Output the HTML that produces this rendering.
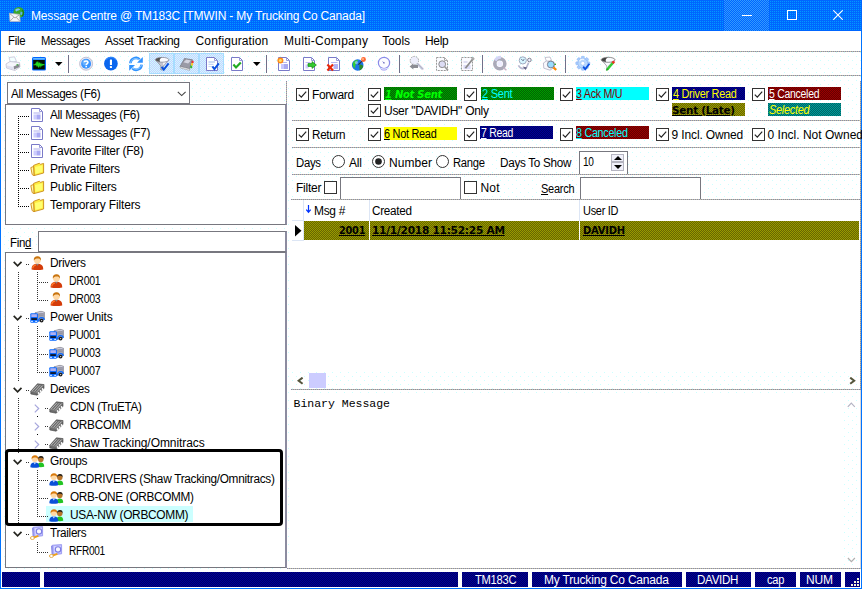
<!DOCTYPE html>
<html lang="en"><head><meta charset="utf-8"><title>Message Centre</title><style>
html,body{margin:0;padding:0}
body{width:862px;height:589px;position:relative;overflow:hidden;background-color:#fff;
background-image:radial-gradient(circle at 0.5px 0.5px,#ccffff 0.55px,transparent 0.7px),radial-gradient(circle at 4.5px 4.5px,#ccffff 0.55px,transparent 0.7px);
background-size:8px 8px;font-family:"Liberation Sans",sans-serif;font-size:12px}
.b{position:absolute;display:block}
.t{position:absolute;white-space:pre;line-height:16px;transform-origin:0 50%}
u{text-decoration:underline}
.bd{font-family:"DejaVu Sans","Liberation Sans",sans-serif}
.mn{font-family:"Liberation Mono",monospace}
</style></head><body>
<div class="b" style="left:0px;top:0px;width:862px;height:31px;background:conic-gradient(#0066ff 50%, #0099ff 0 75%, #0066ff 0) 0 0/2px 2px"></div>
<div class="b" style="left:724px;top:0px;width:45px;height:31px;background:repeating-conic-gradient(#0066ff 0 25%, #3399ff 0 50%) 0 0/2px 2px;"></div>
<svg class="b" style="left:9px;top:7px" width="16" height="16" viewBox="0 0 16 16"><circle cx="9.8" cy="5.4" r="5.4" fill="#3aa82a"/><path d="M6.5 2.2C8 1 10.4 1.2 11.4 2.6C10.2 3.8 8.6 3.2 7.6 4.6C6.6 4.2 6.2 3.2 6.5 2.2Z" fill="#7cc0ff"/><path d="M11.6 4.6L13.6 5.4L13 8L11.2 7.4Z" fill="#5cb0f0"/><path d="M13.4 3C14.8 5 14.6 7.6 13.2 9.4" fill="none" stroke="#1a7a1a" stroke-width="1.2"/><path d="M0.4 6.2L10.6 7.4L11.2 14.6L1 14.4Z" fill="#f4f4f8" stroke="#b8b8c0" stroke-width="0.7"/><path d="M0.6 6.4L6 11L10.6 7.6M1 14.2L4.8 10.2M11 14.4L7.2 10.2" fill="none" stroke="#a4a4a0" stroke-width="0.9"/></svg>
<svg class="b" style="left:742px;top:15px" width="10" height="1" viewBox="0 0 10 1"><rect width="10" height="1" fill="#fff"/></svg>
<svg class="b" style="left:787px;top:10px" width="10" height="10" viewBox="0 0 10 10"><rect x="0.5" y="0.5" width="9" height="9" fill="none" stroke="#fff"/></svg>
<svg class="b" style="left:833px;top:10px" width="10" height="10" viewBox="0 0 10 10"><path d="M0.3 0.3L9.7 9.7M9.7 0.3L0.3 9.7" stroke="#fff" stroke-width="1.1"/></svg>
<div class="b" style="left:0px;top:31px;width:1px;height:558px;background:#0073ff"></div>
<div class="b" style="left:861px;top:31px;width:1px;height:558px;background:#0073ff"></div>
<div class="b" style="left:0px;top:588px;width:862px;height:1px;background:#0073ff"></div>
<div class="b" style="left:1px;top:31px;width:860px;height:20px;background:#fff"></div>
<div class="b" style="left:1px;top:51px;width:860px;height:1px;background:repeating-linear-gradient(to right,#8888b4 0 1px,#c4c49c 1px 2px)"></div>
<div class="b" style="left:1px;top:75px;width:860px;height:1px;background:repeating-linear-gradient(to right,#8888b4 0 1px,#c4c49c 1px 2px)"></div>
<div class="b" style="left:149px;top:53px;width:25px;height:21px;background:repeating-conic-gradient(#ccccff 0 25%, #ccffff 0 50%) 0 0/2px 2px;box-shadow:inset 0 0 0 1px #a6dcff"></div>
<div class="b" style="left:174px;top:53px;width:25px;height:21px;background:repeating-conic-gradient(#ccffff 0 25%, #ccccff 0 50%) 0 0/2px 2px;box-shadow:inset 0 0 0 1px #a6dcff"></div>
<div class="b" style="left:199px;top:53px;width:25px;height:21px;background:repeating-conic-gradient(#ccccff 0 25%, #ccffff 0 50%) 0 0/2px 2px;box-shadow:inset 0 0 0 1px #a6dcff"></div>
<div class="b" style="left:68px;top:55px;width:1px;height:18px;background:#70708a"></div>
<div class="b" style="left:266px;top:55px;width:1px;height:18px;background:#70708a"></div>
<div class="b" style="left:399px;top:55px;width:1px;height:18px;background:#70708a"></div>
<div class="b" style="left:482px;top:55px;width:1px;height:18px;background:#70708a"></div>
<div class="b" style="left:565px;top:55px;width:1px;height:18px;background:#70708a"></div>
<svg class="b" style="left:55px;top:62px" width="8" height="4" viewBox="0 0 8 4"><path d="M0 0H7.5L3.75 4Z" fill="#000"/></svg>
<svg class="b" style="left:252.5px;top:62px" width="8" height="4" viewBox="0 0 8 4"><path d="M0 0H7.5L3.75 4Z" fill="#000"/></svg>
<svg class="b" style="left:5px;top:56px;overflow:visible" width="16" height="16" viewBox="0 0 16 16"><path d="M4 1.5L9.5 0.8L11.5 5.5L5.5 6.5Z" fill="#f4ffff" stroke="#c4c4d8" stroke-width="0.8"/><path d="M1 8L5 5.5L14.5 6.5L15 11L10 14.5L1.5 12Z" fill="#f6f6fb" stroke="#c0c0d0" stroke-width="0.8"/><path d="M8.5 10.5L14.5 8V11L9 13.5Z" fill="#8a8a92"/><path d="M2 9.5L8.5 11V13.5L2 12Z" fill="#e0e0f0"/><rect x="11.5" y="8.2" width="1.6" height="1.2" fill="#3a3"/></svg>
<svg class="b" style="left:31px;top:56px;overflow:visible" width="16" height="16" viewBox="0 0 16 16"><rect x="1" y="1" width="14" height="13.6" rx="1.6" fill="#06f"/><rect x="2.2" y="2" width="11.6" height="1.6" fill="#6bf"/><rect x="2.2" y="4" width="11.6" height="9.4" fill="#041004"/><path d="M2.5 8.8H4.5L5.3 7L6 10.5L6.8 5.5L7.6 11.5L8.4 6.5L9.2 10L10 7.8L10.8 9.6L11.6 8.4L13.5 8.8" fill="none" stroke="#2d2" stroke-width="1.1"/></svg>
<svg class="b" style="left:78px;top:56px;overflow:visible" width="16" height="16" viewBox="0 0 16 16"><circle cx="8.1" cy="7.7" r="6.5" fill="#e8e8f4" stroke="#b4b4c8" stroke-width="0.8"/><circle cx="8.1" cy="7.7" r="5" fill="#3a94ff"/><circle cx="7.4" cy="6.4" r="3" fill="#7cbcff" opacity="0.7"/><path d="M6.2 6.3C6.2 4.4 10 4.4 10 6.3C10 7.6 8.2 7.6 8.2 9" fill="none" stroke="#fff" stroke-width="1.5"/><rect x="7.4" y="9.8" width="1.6" height="1.5" fill="#fff"/></svg>
<svg class="b" style="left:103px;top:56px;overflow:visible" width="16" height="16" viewBox="0 0 16 16"><circle cx="7.9" cy="7.7" r="6.85" fill="#0a66ee"/><path d="M3 4A6 6 0 0 1 13 4" fill="none" stroke="#3a8cff" stroke-width="1.2" opacity="0.8"/><rect x="6.9" y="3.4" width="2.1" height="5.6" rx="0.6" fill="#fff"/><rect x="6.9" y="10" width="2.1" height="2" rx="0.5" fill="#fff"/></svg>
<svg class="b" style="left:128px;top:56px;overflow:visible" width="16" height="16" viewBox="0 0 16 16"><path d="M2.4 7.2A5.5 5.5 0 0 1 11.6 3.4" fill="none" stroke="#2f92ff" stroke-width="2.6"/><path d="M2.6 7A5.3 5.3 0 0 1 11 3.6" fill="none" stroke="#9cd0ff" stroke-width="0.9"/><path d="M14.8 1V6.8H9Z" fill="#2f92ff"/><path d="M13.6 8.6A5.5 5.5 0 0 1 4.4 12.4" fill="none" stroke="#2f92ff" stroke-width="2.6"/><path d="M13.4 8.8A5.3 5.3 0 0 1 5 12.2" fill="none" stroke="#9cd0ff" stroke-width="0.9"/><path d="M1.2 14.8V9H7Z" fill="#2f92ff"/></svg>
<svg class="b" style="left:154px;top:56px;overflow:visible" width="16" height="16" viewBox="0 0 16 16"><path d="M1.4 3.8L6.8 10V14H9.4V10L14.8 3.8Z" fill="#c4c4d0" stroke="#8a8a98" stroke-width="0.7"/><path d="M9 6L13.4 5L9.2 9.6Z" fill="#f4f4fa"/><ellipse cx="8.1" cy="3.8" rx="6.8" ry="2.4" fill="#fbfbff" stroke="#8a8a98" stroke-width="0.8"/><path d="M1.6 3.8C2 2.2 5 1.5 8 1.5C6 2.2 5.2 4 6 5.9C3.5 5.6 1.6 4.8 1.6 3.8Z" fill="#555"/><path d="M7.6 10.8L9.8 13.6L14.6 7.4" fill="none" stroke="#0a50e0" stroke-width="1.9"/></svg>
<svg class="b" style="left:179px;top:56px;overflow:visible" width="16" height="16" viewBox="0 0 16 16"><path d="M1 10.5L5.5 2.5L13.5 3.8L10.5 12.8Z" fill="#9a9aa6" stroke="#70707c" stroke-width="0.7"/><path d="M4.4 6.2L7.4 3.6L11.8 4.6L9.2 7.4Z" fill="#d4d4e0"/><path d="M1 10.5L10.5 12.8L10.7 14.4L1.4 12Z" fill="#f2f2f6" stroke="#888" stroke-width="0.5"/><rect x="12.6" y="4.8" width="2" height="2.4" fill="#e33"/><rect x="12" y="7.2" width="2" height="2.4" fill="#fc2"/><rect x="11.2" y="9.6" width="2" height="2.6" fill="#3b3"/></svg>
<svg class="b" style="left:206px;top:57px;overflow:visible" width="14" height="14" viewBox="0 0 14 14"><path d="M0.5 0.5H8.5L11.5 3.5V13.5H0.5Z" fill="#fff" stroke="#7a7ac8"/><path d="M8.5 0.5V3.5H11.5" fill="none" stroke="#9a9ad8"/><rect x="2.5" y="4.5" width="6.5" height="1" fill="#9ab8f0"/><rect x="2.5" y="6.8" width="5" height="1" fill="#b8ccf4"/><rect x="2.5" y="9" width="3.5" height="1" fill="#c8d8f8"/><path d="M6.4 9.4L8.4 12L12.8 6.4" fill="none" stroke="#0a50e0" stroke-width="2"/></svg>
<svg class="b" style="left:231px;top:57px;overflow:visible" width="14" height="14" viewBox="0 0 14 14"><path d="M0.5 0.5H8.5L11.5 3.5V13.5H0.5Z" fill="#fff" stroke="#7a7ac8"/><path d="M8.5 0.5V3.5H11.5" fill="none" stroke="#9a9ad8"/><path d="M2.4 7.6L5 10.4L9.8 5.4" fill="none" stroke="#2a2" stroke-width="2.2"/></svg>
<svg class="b" style="left:278px;top:57px;overflow:visible" width="14" height="14" viewBox="0 0 14 14"><path d="M0.5 0.5H8.5L11.5 3.5V13.5H0.5Z" fill="#fff" stroke="#7a7ac8"/><path d="M8.5 0.5V3.5H11.5" fill="none" stroke="#9a9ad8"/><rect x="3" y="5" width="6" height="1" fill="#b8b8f0"/><rect x="3" y="7" width="3" height="5" fill="#c8c8ff"/><rect x="6" y="7" width="4" height="5" fill="#a8a8f0"/><circle cx="2.4" cy="3.4" r="3" fill="#ff8a1a"/><circle cx="2.4" cy="3.4" r="1.5" fill="#ffe066"/></svg>
<svg class="b" style="left:303px;top:57px;overflow:visible" width="14" height="14" viewBox="0 0 14 14"><path d="M0.5 0.5H8.5L11.5 3.5V13.5H0.5Z" fill="#fff" stroke="#7a7ac8"/><path d="M8.5 0.5V3.5H11.5" fill="none" stroke="#9a9ad8"/><rect x="2.5" y="5" width="5" height="1" fill="#c0c0f4"/><rect x="2.5" y="7.5" width="3" height="4" fill="#d0d0ff"/><path d="M5 6.6H9V4.6L13.4 8L9 11.4V9.4H5Z" fill="#3c3" stroke="#181" stroke-width="0.7"/></svg>
<svg class="b" style="left:328px;top:57px;overflow:visible" width="14" height="14" viewBox="0 0 14 14"><path d="M0.5 0.5H8.5L11.5 3.5V13.5H0.5Z" fill="#fff" stroke="#7a7ac8"/><path d="M8.5 0.5V3.5H11.5" fill="none" stroke="#9a9ad8"/><rect x="3" y="5" width="6.5" height="1" fill="#b8b8f0"/><rect x="5.5" y="7" width="4.5" height="5" fill="#b4b4f4"/><path d="M-0.6 7.6L5 13.4M5 7.6L-0.6 13.4" stroke="#e8280a" stroke-width="2.2"/></svg>
<svg class="b" style="left:351px;top:56px;overflow:visible" width="16" height="16" viewBox="0 0 16 16"><circle cx="6.7" cy="9" r="5.8" fill="#1a74e8"/><path d="M2.2 6.2C3.6 4.4 5.6 3.6 7 4.2C6.4 5.6 5.4 6 5.6 7.6C4.4 8.6 3.6 10.6 4.4 12.6C2.4 11.4 1 8.6 2.2 6.2Z" fill="#3c3"/><path d="M8.6 8.6C10 8 11.6 8.8 12.2 10.2C11.6 12.6 9.6 14.2 8.4 14.4C9 12.6 7.8 10.4 8.6 8.6Z" fill="#2a8a2a"/><circle cx="5.4" cy="6.6" r="1.6" fill="#9cf" opacity="0.7"/><path d="M7.4 8.6L11.6 4.6" stroke="#333" stroke-width="1.2"/><circle cx="12.5" cy="3.5" r="2.4" fill="#f63"/><circle cx="12" cy="3" r="1" fill="#fb8"/></svg>
<svg class="b" style="left:376px;top:56px;overflow:visible" width="16" height="16" viewBox="0 0 16 16"><circle cx="8" cy="6.9" r="5.6" fill="#fdfdff" stroke="#8a8ae8" stroke-width="1.2"/><path d="M4.6 12.6C5 14.6 11 14.6 11.4 12.6" fill="#eef" stroke="#9a9af0" stroke-width="0.9"/><path d="M8 6.9L6.8 5.6" stroke="#66c" stroke-width="0.9"/><circle cx="8" cy="6.9" r="0.7" fill="#55a"/></svg>
<svg class="b" style="left:408px;top:56px;overflow:visible" width="16" height="16" viewBox="0 0 16 16"><circle cx="6.4" cy="4.6" r="4.2" fill="#eeeefc" stroke="#9a9a9a" stroke-width="0.9" stroke-dasharray="1.6 1"/><path d="M9.4 7.6L15 13.4" stroke="#d0d0e4" stroke-width="2.6"/><path d="M9.4 7.6L15 13.4" stroke="#9a9aa8" stroke-width="0.7"/><path d="M1.6 10.4L5.4 7.4V9H10V12H5.4V13.6Z" fill="#8c8c94"/></svg>
<svg class="b" style="left:436px;top:57px;overflow:visible" width="14" height="14" viewBox="0 0 14 14"><path d="M0.5 0.5H8.5L11.5 3.5V13.5H0.5Z" fill="#fbfbff" stroke="#9a9a9a" stroke-dasharray="2 1"/><path d="M8.5 0.5V3.5H11.5" fill="none" stroke="#aaa"/><circle cx="6.2" cy="7.2" r="3.4" fill="#dcdcf4" stroke="#8c8c8c" stroke-width="1"/><path d="M8.8 9.8L12 13.4" stroke="#999" stroke-width="1.6"/></svg>
<svg class="b" style="left:461px;top:57px;overflow:visible" width="14" height="14" viewBox="0 0 14 14"><path d="M0.5 0.5H11.5V13.5H0.5Z" fill="#fbfbff" stroke="#9a9a9a" stroke-dasharray="2 1"/><rect x="2.5" y="4.5" width="4" height="1" fill="#c4c4e8"/><rect x="2.5" y="8" width="7" height="4" fill="#dcdcf8"/><path d="M4.4 11.2L11.6 2.2" stroke="#8c8c8c" stroke-width="1.8"/><circle cx="12" cy="1.8" r="1.2" fill="#bbb" stroke="#888" stroke-width="0.5"/></svg>
<svg class="b" style="left:492px;top:56px;overflow:visible" width="16" height="16" viewBox="0 0 16 16"><circle cx="7.8" cy="7.7" r="5" fill="none" stroke="#aaaab8" stroke-width="3.6"/><path d="M3.2 4.4A6.4 6.4 0 0 1 9 1.2" fill="none" stroke="#d4d4f4" stroke-width="3"/><circle cx="7.8" cy="7.7" r="2.6" fill="#eef"/><path d="M11.4 11.6L14.4 14.2" stroke="#c4b4c4" stroke-width="1.4"/></svg>
<svg class="b" style="left:517px;top:56px;overflow:visible" width="16" height="16" viewBox="0 0 16 16"><circle cx="5.8" cy="4.4" r="3.6" fill="#d8f6ff" stroke="#9aa0b8" stroke-width="0.9"/><path d="M4.4 3.2L5.8 4.6L7.4 3.4" fill="none" stroke="#446" stroke-width="0.9"/><circle cx="12.4" cy="4" r="1.8" fill="#eef" stroke="#778" stroke-width="0.9"/><path d="M1.4 9.4C3 12.4 6 13.4 9.4 11.6L11.6 6.6" fill="none" stroke="#b8b8d0" stroke-width="1.6"/><path d="M5.6 10.6L8.6 14L10 11.4Z" fill="#668"/></svg>
<svg class="b" style="left:542px;top:56px;overflow:visible" width="16" height="16" viewBox="0 0 16 16"><path d="M3 1.5L8 1L9.6 4.6L4.6 5.6Z" fill="#fff" stroke="#b4b4c4" stroke-width="0.8"/><path d="M1.4 7L4.4 5L12 6L12.6 11L8 14.2L1.8 12.2Z" fill="#f8f8fc" stroke="#b0b0c4" stroke-width="0.8"/><circle cx="8.8" cy="8.5" r="3.4" fill="#9adcff" stroke="#778" stroke-width="0.9"/><rect x="12.4" y="7.6" width="1.6" height="1.4" fill="#3a3"/><path d="M11.4 11.4L14.2 14" stroke="#f80" stroke-width="2.2"/></svg>
<svg class="b" style="left:575px;top:56px;overflow:visible" width="16" height="16" viewBox="0 0 16 16"><rect x="6.3" y="0.3" width="3" height="3.4" rx="0.8" fill="#a8ccff" stroke="#86b0f0" stroke-width="0.5" transform="rotate(0 7.8 7.3)"/><rect x="6.3" y="0.3" width="3" height="3.4" rx="0.8" fill="#a8ccff" stroke="#86b0f0" stroke-width="0.5" transform="rotate(45 7.8 7.3)"/><rect x="6.3" y="0.3" width="3" height="3.4" rx="0.8" fill="#a8ccff" stroke="#86b0f0" stroke-width="0.5" transform="rotate(90 7.8 7.3)"/><rect x="6.3" y="0.3" width="3" height="3.4" rx="0.8" fill="#a8ccff" stroke="#86b0f0" stroke-width="0.5" transform="rotate(135 7.8 7.3)"/><rect x="6.3" y="0.3" width="3" height="3.4" rx="0.8" fill="#a8ccff" stroke="#86b0f0" stroke-width="0.5" transform="rotate(180 7.8 7.3)"/><rect x="6.3" y="0.3" width="3" height="3.4" rx="0.8" fill="#a8ccff" stroke="#86b0f0" stroke-width="0.5" transform="rotate(225 7.8 7.3)"/><rect x="6.3" y="0.3" width="3" height="3.4" rx="0.8" fill="#a8ccff" stroke="#86b0f0" stroke-width="0.5" transform="rotate(270 7.8 7.3)"/><rect x="6.3" y="0.3" width="3" height="3.4" rx="0.8" fill="#a8ccff" stroke="#86b0f0" stroke-width="0.5" transform="rotate(315 7.8 7.3)"/><circle cx="7.8" cy="7.3" r="4.9" fill="#b8d8ff" stroke="#86b0f0" stroke-width="0.6"/><circle cx="7.8" cy="7.3" r="2" fill="#fff" stroke="#9ac0f4" stroke-width="0.6"/><path d="M4.4 5.2A4 4 0 0 1 9 3.4" fill="none" stroke="#fff" stroke-width="1.2" opacity="0.8"/><path d="M8.2 10.6L10.2 13.2L14.4 7.8" fill="none" stroke="#0a50e0" stroke-width="1.8"/></svg>
<svg class="b" style="left:600px;top:56px;overflow:visible" width="16" height="16" viewBox="0 0 16 16"><path d="M1.4 3.8L6.8 10V14L8.6 13V10L14.8 3.8Z" fill="#fafaff" stroke="#8a8a98" stroke-width="0.7"/><ellipse cx="8.1" cy="3.8" rx="6.9" ry="2.5" fill="#fbfbff" stroke="#777" stroke-width="0.8"/><path d="M1.5 3.8C2 2.2 5 1.5 8 1.5C6 2.2 5.2 4 6 5.9C3.5 5.6 1.5 4.8 1.5 3.8Z" fill="#444"/><path d="M7.2 13.6L13.2 6.4" stroke="#3c3" stroke-width="2.4"/><path d="M12.6 7.2L14.2 5.2" stroke="#e32" stroke-width="2.6"/><path d="M6.4 14.6L7.8 12.8" stroke="#2a2" stroke-width="1.6"/></svg>
<div class="b" style="left:7px;top:82px;width:183px;height:22px;background:#fff;border:1px solid #77777f;box-sizing:border-box"></div>
<svg class="b" style="left:177px;top:91px" width="10" height="6" viewBox="0 0 10 6"><path d="M0.8 0.8L4.7 4.6L8.6 0.8" fill="none" stroke="#444" stroke-width="1.1"/></svg>
<div class="b" style="left:5px;top:104px;width:282px;height:121px;background:#fff;border:1px solid #77777f;border-right:2px solid #8c8ca0;box-sizing:border-box"></div>
<div class="b" style="left:18px;top:116px;width:1px;height:91px;background:repeating-linear-gradient(to bottom,#000 0 1px,transparent 1px 2px)"></div>
<div class="b" style="left:18px;top:116px;width:11px;height:1px;background:repeating-linear-gradient(to right,#000 0 1px,transparent 1px 2px)"></div>
<div class="b" style="left:18px;top:134px;width:11px;height:1px;background:repeating-linear-gradient(to right,#000 0 1px,transparent 1px 2px)"></div>
<div class="b" style="left:18px;top:152px;width:11px;height:1px;background:repeating-linear-gradient(to right,#000 0 1px,transparent 1px 2px)"></div>
<div class="b" style="left:18px;top:170px;width:11px;height:1px;background:repeating-linear-gradient(to right,#000 0 1px,transparent 1px 2px)"></div>
<div class="b" style="left:18px;top:188px;width:11px;height:1px;background:repeating-linear-gradient(to right,#000 0 1px,transparent 1px 2px)"></div>
<div class="b" style="left:18px;top:206px;width:11px;height:1px;background:repeating-linear-gradient(to right,#000 0 1px,transparent 1px 2px)"></div>
<div class="b" style="left:38px;top:231px;width:249px;height:21px;background:#fff;border:1px solid #77777f;border-right:2px solid #8c8ca0;box-sizing:border-box"></div>
<div class="b" style="left:5px;top:252px;width:282px;height:316px;background:#fff;border:1px solid #77777f;border-right:2px solid #8c8ca0;box-sizing:border-box"></div>
<div class="b" style="left:46px;top:506px;width:147px;height:16px;background:#ccffff"></div>
<div class="b" style="left:18px;top:272px;width:1px;height:38px;background:repeating-linear-gradient(to bottom,#333 0 1px,transparent 1px 2px)"></div>
<div class="b" style="left:18px;top:326px;width:1px;height:56px;background:repeating-linear-gradient(to bottom,#333 0 1px,transparent 1px 2px)"></div>
<div class="b" style="left:18px;top:398px;width:1px;height:56px;background:repeating-linear-gradient(to bottom,#333 0 1px,transparent 1px 2px)"></div>
<div class="b" style="left:18px;top:470px;width:1px;height:56px;background:repeating-linear-gradient(to bottom,#333 0 1px,transparent 1px 2px)"></div>
<div class="b" style="left:26px;top:264px;width:4px;height:1px;background:repeating-linear-gradient(to right,#333 0 1px,transparent 1px 2px)"></div>
<div class="b" style="left:26px;top:318px;width:4px;height:1px;background:repeating-linear-gradient(to right,#333 0 1px,transparent 1px 2px)"></div>
<div class="b" style="left:26px;top:390px;width:4px;height:1px;background:repeating-linear-gradient(to right,#333 0 1px,transparent 1px 2px)"></div>
<div class="b" style="left:26px;top:462px;width:4px;height:1px;background:repeating-linear-gradient(to right,#333 0 1px,transparent 1px 2px)"></div>
<div class="b" style="left:26px;top:534px;width:4px;height:1px;background:repeating-linear-gradient(to right,#333 0 1px,transparent 1px 2px)"></div>
<div class="b" style="left:37px;top:272px;width:1px;height:29px;background:repeating-linear-gradient(to bottom,#333 0 1px,transparent 1px 2px)"></div>
<div class="b" style="left:37px;top:282px;width:11px;height:1px;background:repeating-linear-gradient(to right,#333 0 1px,transparent 1px 2px)"></div>
<div class="b" style="left:37px;top:300px;width:11px;height:1px;background:repeating-linear-gradient(to right,#333 0 1px,transparent 1px 2px)"></div>
<div class="b" style="left:37px;top:326px;width:1px;height:47px;background:repeating-linear-gradient(to bottom,#333 0 1px,transparent 1px 2px)"></div>
<div class="b" style="left:37px;top:336px;width:11px;height:1px;background:repeating-linear-gradient(to right,#333 0 1px,transparent 1px 2px)"></div>
<div class="b" style="left:37px;top:354px;width:11px;height:1px;background:repeating-linear-gradient(to right,#333 0 1px,transparent 1px 2px)"></div>
<div class="b" style="left:37px;top:372px;width:11px;height:1px;background:repeating-linear-gradient(to right,#333 0 1px,transparent 1px 2px)"></div>
<div class="b" style="left:37px;top:398px;width:1px;height:1px;background:#000"></div>
<div class="b" style="left:37px;top:416px;width:1px;height:1px;background:#000"></div>
<div class="b" style="left:37px;top:434px;width:1px;height:1px;background:#000"></div>
<div class="b" style="left:45px;top:408px;width:4px;height:1px;background:repeating-linear-gradient(to right,#333 0 1px,transparent 1px 2px)"></div>
<div class="b" style="left:45px;top:426px;width:4px;height:1px;background:repeating-linear-gradient(to right,#333 0 1px,transparent 1px 2px)"></div>
<div class="b" style="left:45px;top:444px;width:4px;height:1px;background:repeating-linear-gradient(to right,#333 0 1px,transparent 1px 2px)"></div>
<div class="b" style="left:37px;top:470px;width:1px;height:47px;background:repeating-linear-gradient(to bottom,#333 0 1px,transparent 1px 2px)"></div>
<div class="b" style="left:37px;top:480px;width:11px;height:1px;background:repeating-linear-gradient(to right,#333 0 1px,transparent 1px 2px)"></div>
<div class="b" style="left:37px;top:498px;width:11px;height:1px;background:repeating-linear-gradient(to right,#333 0 1px,transparent 1px 2px)"></div>
<div class="b" style="left:37px;top:516px;width:11px;height:1px;background:repeating-linear-gradient(to right,#333 0 1px,transparent 1px 2px)"></div>
<div class="b" style="left:37px;top:542px;width:1px;height:11px;background:repeating-linear-gradient(to bottom,#333 0 1px,transparent 1px 2px)"></div>
<div class="b" style="left:37px;top:552px;width:11px;height:1px;background:repeating-linear-gradient(to right,#333 0 1px,transparent 1px 2px)"></div>
<svg class="b" style="left:13px;top:261px" width="10" height="7" viewBox="0 0 10 7"><path d="M0.7 0.9L4.6 4.9L8.5 0.9" fill="none" stroke="#262620" stroke-width="1.7"/></svg>
<svg class="b" style="left:13px;top:315px" width="10" height="7" viewBox="0 0 10 7"><path d="M0.7 0.9L4.6 4.9L8.5 0.9" fill="none" stroke="#262620" stroke-width="1.7"/></svg>
<svg class="b" style="left:13px;top:387px" width="10" height="7" viewBox="0 0 10 7"><path d="M0.7 0.9L4.6 4.9L8.5 0.9" fill="none" stroke="#262620" stroke-width="1.7"/></svg>
<svg class="b" style="left:13px;top:459px" width="10" height="7" viewBox="0 0 10 7"><path d="M0.7 0.9L4.6 4.9L8.5 0.9" fill="none" stroke="#262620" stroke-width="1.7"/></svg>
<svg class="b" style="left:13px;top:531px" width="10" height="7" viewBox="0 0 10 7"><path d="M0.7 0.9L4.6 4.9L8.5 0.9" fill="none" stroke="#262620" stroke-width="1.7"/></svg>
<svg class="b" style="left:34px;top:404px" width="6" height="10" viewBox="0 0 6 10"><path d="M0.8 0.6L4.7 4.5L0.8 8.4" fill="none" stroke="#a6a6dc" stroke-width="1.2"/></svg>
<svg class="b" style="left:34px;top:422px" width="6" height="10" viewBox="0 0 6 10"><path d="M0.8 0.6L4.7 4.5L0.8 8.4" fill="none" stroke="#a6a6dc" stroke-width="1.2"/></svg>
<svg class="b" style="left:34px;top:440px" width="6" height="10" viewBox="0 0 6 10"><path d="M0.8 0.6L4.7 4.5L0.8 8.4" fill="none" stroke="#a6a6dc" stroke-width="1.2"/></svg>
<svg class="b" style="left:31px;top:108px;overflow:visible" width="13" height="14" viewBox="0 0 13 14"><path d="M0.5 0.5H8.5L11.5 3.5V13.5H0.5Z" fill="#fff" stroke="#7a7ac8"/><path d="M8.5 0.5V3.5H11.5" fill="none" stroke="#9a9ad8"/><rect x="2.5" y="4.5" width="7" height="1" fill="#b0b0ee"/><rect x="2.5" y="6.5" width="3" height="5" fill="#ccf"/><rect x="5.5" y="6.5" width="4" height="5" fill="#aaaaf4"/></svg>
<svg class="b" style="left:31px;top:126px;overflow:visible" width="13" height="14" viewBox="0 0 13 14"><path d="M0.5 0.5H8.5L11.5 3.5V13.5H0.5Z" fill="#fff" stroke="#7a7ac8"/><path d="M8.5 0.5V3.5H11.5" fill="none" stroke="#9a9ad8"/><rect x="2.5" y="4.5" width="7" height="1" fill="#b0b0ee"/><rect x="2.5" y="6.5" width="3" height="5" fill="#ccf"/><rect x="5.5" y="6.5" width="4" height="5" fill="#aaaaf4"/></svg>
<svg class="b" style="left:31px;top:144px;overflow:visible" width="13" height="14" viewBox="0 0 13 14"><path d="M0.5 0.5H8.5L11.5 3.5V13.5H0.5Z" fill="#fff" stroke="#7a7ac8"/><path d="M8.5 0.5V3.5H11.5" fill="none" stroke="#9a9ad8"/><rect x="2.5" y="4.5" width="7" height="1" fill="#b0b0ee"/><rect x="2.5" y="6.5" width="3" height="5" fill="#ccf"/><rect x="5.5" y="6.5" width="4" height="5" fill="#aaaaf4"/></svg>
<svg class="b" style="left:30px;top:162px;overflow:visible" width="15" height="14" viewBox="0 0 15 14"><path d="M3.6 3.4L9.4 1.2L10.4 2.4L13.6 1.4V11L4 13.6Z" fill="#ffec40" stroke="#c88a1a" stroke-width="0.9"/><path d="M0.8 5.6L3.6 4.4L4 13.6L2.2 12.6Z" fill="#fff8b0" stroke="#d08a10" stroke-width="0.9"/><path d="M5 5L12.4 3.2V9.8L5.4 12Z" fill="#ffff70"/></svg>
<svg class="b" style="left:30px;top:180px;overflow:visible" width="15" height="14" viewBox="0 0 15 14"><path d="M3.6 3.4L9.4 1.2L10.4 2.4L13.6 1.4V11L4 13.6Z" fill="#ffec40" stroke="#c88a1a" stroke-width="0.9"/><path d="M0.8 5.6L3.6 4.4L4 13.6L2.2 12.6Z" fill="#fff8b0" stroke="#d08a10" stroke-width="0.9"/><path d="M5 5L12.4 3.2V9.8L5.4 12Z" fill="#ffff70"/></svg>
<svg class="b" style="left:30px;top:198px;overflow:visible" width="15" height="14" viewBox="0 0 15 14"><path d="M3.6 3.4L9.4 1.2L10.4 2.4L13.6 1.4V11L4 13.6Z" fill="#ffec40" stroke="#c88a1a" stroke-width="0.9"/><path d="M0.8 5.6L3.6 4.4L4 13.6L2.2 12.6Z" fill="#fff8b0" stroke="#d08a10" stroke-width="0.9"/><path d="M5 5L12.4 3.2V9.8L5.4 12Z" fill="#ffff70"/></svg>
<svg class="b" style="left:31px;top:256px;overflow:visible" width="13" height="14" viewBox="0 0 13 14"><path d="M0.6 13.4C0.4 9.4 3 7.8 6.4 7.8C9.8 7.8 12.4 9.4 12.2 13.4Q6.4 14.6 0.6 13.4Z" fill="#d43c0a"/><path d="M1.6 12.4C2 10 3.4 9 5 8.8" fill="none" stroke="#ff7a2a" stroke-width="1.2"/><path d="M4.8 7.8L6.4 9.8L8 7.8Z" fill="#888"/><circle cx="6.4" cy="4.2" r="3.4" fill="#ffd8a4"/><path d="M2.8 4.6C2.4 1.6 4.4 0.2 6.6 0.3C9 0.4 10.4 2 10 4.6C9.4 3 8.4 2.4 6.8 2.4C5 2.4 3.6 3 2.8 4.6Z" fill="#c87410"/></svg>
<svg class="b" style="left:50px;top:274px;overflow:visible" width="13" height="14" viewBox="0 0 13 14"><path d="M0.6 13.4C0.4 9.4 3 7.8 6.4 7.8C9.8 7.8 12.4 9.4 12.2 13.4Q6.4 14.6 0.6 13.4Z" fill="#d43c0a"/><path d="M1.6 12.4C2 10 3.4 9 5 8.8" fill="none" stroke="#ff7a2a" stroke-width="1.2"/><path d="M4.8 7.8L6.4 9.8L8 7.8Z" fill="#888"/><circle cx="6.4" cy="4.2" r="3.4" fill="#ffd8a4"/><path d="M2.8 4.6C2.4 1.6 4.4 0.2 6.6 0.3C9 0.4 10.4 2 10 4.6C9.4 3 8.4 2.4 6.8 2.4C5 2.4 3.6 3 2.8 4.6Z" fill="#c87410"/></svg>
<svg class="b" style="left:50px;top:292px;overflow:visible" width="13" height="14" viewBox="0 0 13 14"><path d="M0.6 13.4C0.4 9.4 3 7.8 6.4 7.8C9.8 7.8 12.4 9.4 12.2 13.4Q6.4 14.6 0.6 13.4Z" fill="#d43c0a"/><path d="M1.6 12.4C2 10 3.4 9 5 8.8" fill="none" stroke="#ff7a2a" stroke-width="1.2"/><path d="M4.8 7.8L6.4 9.8L8 7.8Z" fill="#888"/><circle cx="6.4" cy="4.2" r="3.4" fill="#ffd8a4"/><path d="M2.8 4.6C2.4 1.6 4.4 0.2 6.6 0.3C9 0.4 10.4 2 10 4.6C9.4 3 8.4 2.4 6.8 2.4C5 2.4 3.6 3 2.8 4.6Z" fill="#c87410"/></svg>
<svg class="b" style="left:30px;top:311px;overflow:visible" width="15" height="13" viewBox="0 0 15 13"><path d="M5 1.8L11 0.3L14.4 1.2V8.2L9 10.4L5 9Z" fill="#a4a4b4" stroke="#70707c" stroke-width="0.6"/><path d="M6 2.4L11 1.2L13.8 1.9" fill="none" stroke="#d4d4e4" stroke-width="0.9"/><path d="M8 3.4L13.6 2.6M8 5L13.6 4.2" stroke="#8a8a98" stroke-width="0.7"/><rect x="0.3" y="2.2" width="7.6" height="9.6" rx="1" fill="#0a6aff"/><rect x="1.3" y="3.2" width="5.6" height="2.8" fill="#b0b0f0"/><rect x="1.3" y="7.2" width="5.6" height="1.7" fill="#101018"/><rect x="1.1" y="9.8" width="1.8" height="1.2" fill="#cfe4ff"/><rect x="5.2" y="9.8" width="1.8" height="1.2" fill="#cfe4ff"/><path d="M8.6 10.6C8.6 7.6 9.8 6.6 11.6 6.6C13.2 6.6 14.2 7.6 14.2 9" fill="none" stroke="#0a6aff" stroke-width="1.3"/><circle cx="11.6" cy="9.6" r="1.9" fill="#181818"/><circle cx="11.6" cy="9.6" r="0.7" fill="#ddd"/></svg>
<svg class="b" style="left:49px;top:329px;overflow:visible" width="15" height="13" viewBox="0 0 15 13"><path d="M5 1.8L11 0.3L14.4 1.2V8.2L9 10.4L5 9Z" fill="#a4a4b4" stroke="#70707c" stroke-width="0.6"/><path d="M6 2.4L11 1.2L13.8 1.9" fill="none" stroke="#d4d4e4" stroke-width="0.9"/><path d="M8 3.4L13.6 2.6M8 5L13.6 4.2" stroke="#8a8a98" stroke-width="0.7"/><rect x="0.3" y="2.2" width="7.6" height="9.6" rx="1" fill="#0a6aff"/><rect x="1.3" y="3.2" width="5.6" height="2.8" fill="#b0b0f0"/><rect x="1.3" y="7.2" width="5.6" height="1.7" fill="#101018"/><rect x="1.1" y="9.8" width="1.8" height="1.2" fill="#cfe4ff"/><rect x="5.2" y="9.8" width="1.8" height="1.2" fill="#cfe4ff"/><path d="M8.6 10.6C8.6 7.6 9.8 6.6 11.6 6.6C13.2 6.6 14.2 7.6 14.2 9" fill="none" stroke="#0a6aff" stroke-width="1.3"/><circle cx="11.6" cy="9.6" r="1.9" fill="#181818"/><circle cx="11.6" cy="9.6" r="0.7" fill="#ddd"/></svg>
<svg class="b" style="left:49px;top:347px;overflow:visible" width="15" height="13" viewBox="0 0 15 13"><path d="M5 1.8L11 0.3L14.4 1.2V8.2L9 10.4L5 9Z" fill="#a4a4b4" stroke="#70707c" stroke-width="0.6"/><path d="M6 2.4L11 1.2L13.8 1.9" fill="none" stroke="#d4d4e4" stroke-width="0.9"/><path d="M8 3.4L13.6 2.6M8 5L13.6 4.2" stroke="#8a8a98" stroke-width="0.7"/><rect x="0.3" y="2.2" width="7.6" height="9.6" rx="1" fill="#0a6aff"/><rect x="1.3" y="3.2" width="5.6" height="2.8" fill="#b0b0f0"/><rect x="1.3" y="7.2" width="5.6" height="1.7" fill="#101018"/><rect x="1.1" y="9.8" width="1.8" height="1.2" fill="#cfe4ff"/><rect x="5.2" y="9.8" width="1.8" height="1.2" fill="#cfe4ff"/><path d="M8.6 10.6C8.6 7.6 9.8 6.6 11.6 6.6C13.2 6.6 14.2 7.6 14.2 9" fill="none" stroke="#0a6aff" stroke-width="1.3"/><circle cx="11.6" cy="9.6" r="1.9" fill="#181818"/><circle cx="11.6" cy="9.6" r="0.7" fill="#ddd"/></svg>
<svg class="b" style="left:49px;top:365px;overflow:visible" width="15" height="13" viewBox="0 0 15 13"><path d="M5 1.8L11 0.3L14.4 1.2V8.2L9 10.4L5 9Z" fill="#a4a4b4" stroke="#70707c" stroke-width="0.6"/><path d="M6 2.4L11 1.2L13.8 1.9" fill="none" stroke="#d4d4e4" stroke-width="0.9"/><path d="M8 3.4L13.6 2.6M8 5L13.6 4.2" stroke="#8a8a98" stroke-width="0.7"/><rect x="0.3" y="2.2" width="7.6" height="9.6" rx="1" fill="#0a6aff"/><rect x="1.3" y="3.2" width="5.6" height="2.8" fill="#b0b0f0"/><rect x="1.3" y="7.2" width="5.6" height="1.7" fill="#101018"/><rect x="1.1" y="9.8" width="1.8" height="1.2" fill="#cfe4ff"/><rect x="5.2" y="9.8" width="1.8" height="1.2" fill="#cfe4ff"/><path d="M8.6 10.6C8.6 7.6 9.8 6.6 11.6 6.6C13.2 6.6 14.2 7.6 14.2 9" fill="none" stroke="#0a6aff" stroke-width="1.3"/><circle cx="11.6" cy="9.6" r="1.9" fill="#181818"/><circle cx="11.6" cy="9.6" r="0.7" fill="#ddd"/></svg>
<svg class="b" style="left:30px;top:383px;overflow:visible" width="15" height="13" viewBox="0 0 15 13"><path d="M0.8 8.2L7.4 0.8L14 1.6V5.2L7.2 12.2L0.8 11Z" fill="#6c6c6c" stroke="#444" stroke-width="0.6"/><path d="M2.2 8L8 1.8M4.4 8.6L10.2 2.2M6.6 9L12.4 2.6" stroke="#b4b4b4" stroke-width="1"/><path d="M0.8 8.2L7.2 9.4L14 1.6" fill="none" stroke="#999" stroke-width="0.6"/><circle cx="8.6" cy="10" r="0.9" fill="#fff"/><circle cx="10.6" cy="8" r="0.9" fill="#fff"/><circle cx="12.6" cy="6" r="0.9" fill="#fff"/></svg>
<svg class="b" style="left:49px;top:401px;overflow:visible" width="15" height="13" viewBox="0 0 15 13"><path d="M0.8 8.2L7.4 0.8L14 1.6V5.2L7.2 12.2L0.8 11Z" fill="#6c6c6c" stroke="#444" stroke-width="0.6"/><path d="M2.2 8L8 1.8M4.4 8.6L10.2 2.2M6.6 9L12.4 2.6" stroke="#b4b4b4" stroke-width="1"/><path d="M0.8 8.2L7.2 9.4L14 1.6" fill="none" stroke="#999" stroke-width="0.6"/><circle cx="8.6" cy="10" r="0.9" fill="#fff"/><circle cx="10.6" cy="8" r="0.9" fill="#fff"/><circle cx="12.6" cy="6" r="0.9" fill="#fff"/></svg>
<svg class="b" style="left:49px;top:419px;overflow:visible" width="15" height="13" viewBox="0 0 15 13"><path d="M0.8 8.2L7.4 0.8L14 1.6V5.2L7.2 12.2L0.8 11Z" fill="#6c6c6c" stroke="#444" stroke-width="0.6"/><path d="M2.2 8L8 1.8M4.4 8.6L10.2 2.2M6.6 9L12.4 2.6" stroke="#b4b4b4" stroke-width="1"/><path d="M0.8 8.2L7.2 9.4L14 1.6" fill="none" stroke="#999" stroke-width="0.6"/><circle cx="8.6" cy="10" r="0.9" fill="#fff"/><circle cx="10.6" cy="8" r="0.9" fill="#fff"/><circle cx="12.6" cy="6" r="0.9" fill="#fff"/></svg>
<svg class="b" style="left:49px;top:437px;overflow:visible" width="15" height="13" viewBox="0 0 15 13"><path d="M0.8 8.2L7.4 0.8L14 1.6V5.2L7.2 12.2L0.8 11Z" fill="#6c6c6c" stroke="#444" stroke-width="0.6"/><path d="M2.2 8L8 1.8M4.4 8.6L10.2 2.2M6.6 9L12.4 2.6" stroke="#b4b4b4" stroke-width="1"/><path d="M0.8 8.2L7.2 9.4L14 1.6" fill="none" stroke="#999" stroke-width="0.6"/><circle cx="8.6" cy="10" r="0.9" fill="#fff"/><circle cx="10.6" cy="8" r="0.9" fill="#fff"/><circle cx="12.6" cy="6" r="0.9" fill="#fff"/></svg>
<svg class="b" style="left:30px;top:454.5px;overflow:visible" width="15" height="13" viewBox="0 0 15 13"><path d="M7.4 11.8C7.4 8.8 8.6 7.4 10.8 7.4C13 7.4 14.4 8.8 14.2 11.8Q10.8 12.6 7.4 11.8Z" fill="#22c422"/><circle cx="10.8" cy="4.6" r="2.7" fill="#b8742a"/><path d="M8 4.4C7.8 2 9.4 1 11 1C12.8 1 14 2.2 13.6 4.4C13 3.2 12.2 2.8 10.8 2.8C9.6 2.8 8.6 3.2 8 4.4Z" fill="#221a10"/><path d="M0.4 12.2C0.2 8.8 2 7.4 4.8 7.4C7.6 7.4 9.4 8.8 9.2 12.2Q4.8 13.2 0.4 12.2Z" fill="#0a50d8"/><path d="M3.6 7.4L4.8 9.6L6 7.4Z" fill="#cfe4ff"/><circle cx="4.8" cy="4" r="3" fill="#ffd8a4"/><path d="M1.6 4.4C1.2 1.6 3 0.3 5 0.3C7.2 0.3 8.6 1.8 8 4.4C7.6 3 6.6 2.4 5 2.4C3.4 2.4 2.4 3 1.6 4.4Z" fill="#d8780a"/></svg>
<svg class="b" style="left:49px;top:472.5px;overflow:visible" width="15" height="13" viewBox="0 0 15 13"><path d="M7.4 11.8C7.4 8.8 8.6 7.4 10.8 7.4C13 7.4 14.4 8.8 14.2 11.8Q10.8 12.6 7.4 11.8Z" fill="#22c422"/><circle cx="10.8" cy="4.6" r="2.7" fill="#b8742a"/><path d="M8 4.4C7.8 2 9.4 1 11 1C12.8 1 14 2.2 13.6 4.4C13 3.2 12.2 2.8 10.8 2.8C9.6 2.8 8.6 3.2 8 4.4Z" fill="#221a10"/><path d="M0.4 12.2C0.2 8.8 2 7.4 4.8 7.4C7.6 7.4 9.4 8.8 9.2 12.2Q4.8 13.2 0.4 12.2Z" fill="#0a50d8"/><path d="M3.6 7.4L4.8 9.6L6 7.4Z" fill="#cfe4ff"/><circle cx="4.8" cy="4" r="3" fill="#ffd8a4"/><path d="M1.6 4.4C1.2 1.6 3 0.3 5 0.3C7.2 0.3 8.6 1.8 8 4.4C7.6 3 6.6 2.4 5 2.4C3.4 2.4 2.4 3 1.6 4.4Z" fill="#d8780a"/></svg>
<svg class="b" style="left:49px;top:490.5px;overflow:visible" width="15" height="13" viewBox="0 0 15 13"><path d="M7.4 11.8C7.4 8.8 8.6 7.4 10.8 7.4C13 7.4 14.4 8.8 14.2 11.8Q10.8 12.6 7.4 11.8Z" fill="#22c422"/><circle cx="10.8" cy="4.6" r="2.7" fill="#b8742a"/><path d="M8 4.4C7.8 2 9.4 1 11 1C12.8 1 14 2.2 13.6 4.4C13 3.2 12.2 2.8 10.8 2.8C9.6 2.8 8.6 3.2 8 4.4Z" fill="#221a10"/><path d="M0.4 12.2C0.2 8.8 2 7.4 4.8 7.4C7.6 7.4 9.4 8.8 9.2 12.2Q4.8 13.2 0.4 12.2Z" fill="#0a50d8"/><path d="M3.6 7.4L4.8 9.6L6 7.4Z" fill="#cfe4ff"/><circle cx="4.8" cy="4" r="3" fill="#ffd8a4"/><path d="M1.6 4.4C1.2 1.6 3 0.3 5 0.3C7.2 0.3 8.6 1.8 8 4.4C7.6 3 6.6 2.4 5 2.4C3.4 2.4 2.4 3 1.6 4.4Z" fill="#d8780a"/></svg>
<svg class="b" style="left:49px;top:508.5px;overflow:visible" width="15" height="13" viewBox="0 0 15 13"><path d="M7.4 11.8C7.4 8.8 8.6 7.4 10.8 7.4C13 7.4 14.4 8.8 14.2 11.8Q10.8 12.6 7.4 11.8Z" fill="#22c422"/><circle cx="10.8" cy="4.6" r="2.7" fill="#b8742a"/><path d="M8 4.4C7.8 2 9.4 1 11 1C12.8 1 14 2.2 13.6 4.4C13 3.2 12.2 2.8 10.8 2.8C9.6 2.8 8.6 3.2 8 4.4Z" fill="#221a10"/><path d="M0.4 12.2C0.2 8.8 2 7.4 4.8 7.4C7.6 7.4 9.4 8.8 9.2 12.2Q4.8 13.2 0.4 12.2Z" fill="#0a50d8"/><path d="M3.6 7.4L4.8 9.6L6 7.4Z" fill="#cfe4ff"/><circle cx="4.8" cy="4" r="3" fill="#ffd8a4"/><path d="M1.6 4.4C1.2 1.6 3 0.3 5 0.3C7.2 0.3 8.6 1.8 8 4.4C7.6 3 6.6 2.4 5 2.4C3.4 2.4 2.4 3 1.6 4.4Z" fill="#d8780a"/></svg>
<svg class="b" style="left:30px;top:526px;overflow:visible" width="14" height="14" viewBox="0 0 14 14"><path d="M3.4 1.2L12.6 0.6V9.8L4 10.8Z" fill="#b8b8ff" stroke="#9090ee" stroke-width="0.8"/><path d="M5 2.2L11.6 1.8V8.8L5.4 9.4Z" fill="#dcdcff"/><circle cx="9" cy="5.4" r="2.7" fill="#f8f8ff" stroke="#7c7ce4" stroke-width="1.1"/><path d="M2 2L3.4 1.2L4 10.8L2.6 10.2Z" fill="#8c8ce8"/><path d="M2.8 11.8L8.4 9.8" stroke="#f0a010" stroke-width="1.8"/><ellipse cx="2.4" cy="12" rx="2" ry="1.5" fill="#fff" stroke="#e0a030" stroke-width="0.8"/></svg>
<svg class="b" style="left:49px;top:544px;overflow:visible" width="14" height="14" viewBox="0 0 14 14"><path d="M3.4 1.2L12.6 0.6V9.8L4 10.8Z" fill="#b8b8ff" stroke="#9090ee" stroke-width="0.8"/><path d="M5 2.2L11.6 1.8V8.8L5.4 9.4Z" fill="#dcdcff"/><circle cx="9" cy="5.4" r="2.7" fill="#f8f8ff" stroke="#7c7ce4" stroke-width="1.1"/><path d="M2 2L3.4 1.2L4 10.8L2.6 10.2Z" fill="#8c8ce8"/><path d="M2.8 11.8L8.4 9.8" stroke="#f0a010" stroke-width="1.8"/><ellipse cx="2.4" cy="12" rx="2" ry="1.5" fill="#fff" stroke="#e0a030" stroke-width="0.8"/></svg>
<div class="b" style="left:5px;top:449px;width:278px;height:77px;border:3px solid #000;border-radius:4px;box-sizing:border-box"></div>
<div class="b" style="left:286px;top:81px;width:1px;height:23px;background:repeating-linear-gradient(to bottom,#8888b4 0 1px,#c4c49c 1px 2px)"></div>
<svg class="b" style="left:296px;top:88px" width="13" height="13" viewBox="0 0 13 13"><rect x="0.5" y="0.5" width="12" height="12" fill="#fff" stroke="#333"/><path d="M2.8 6.6L5.3 9.2L10.2 3.6" fill="none" stroke="#222" stroke-width="1.2"/></svg>
<svg class="b" style="left:368px;top:88px" width="13" height="13" viewBox="0 0 13 13"><rect x="0.5" y="0.5" width="12" height="12" fill="#fff" stroke="#333"/><path d="M2.8 6.6L5.3 9.2L10.2 3.6" fill="none" stroke="#222" stroke-width="1.2"/></svg>
<svg class="b" style="left:464px;top:88px" width="13" height="13" viewBox="0 0 13 13"><rect x="0.5" y="0.5" width="12" height="12" fill="#fff" stroke="#333"/><path d="M2.8 6.6L5.3 9.2L10.2 3.6" fill="none" stroke="#222" stroke-width="1.2"/></svg>
<svg class="b" style="left:560px;top:88px" width="13" height="13" viewBox="0 0 13 13"><rect x="0.5" y="0.5" width="12" height="12" fill="#fff" stroke="#333"/><path d="M2.8 6.6L5.3 9.2L10.2 3.6" fill="none" stroke="#222" stroke-width="1.2"/></svg>
<svg class="b" style="left:656px;top:88px" width="13" height="13" viewBox="0 0 13 13"><rect x="0.5" y="0.5" width="12" height="12" fill="#fff" stroke="#333"/><path d="M2.8 6.6L5.3 9.2L10.2 3.6" fill="none" stroke="#222" stroke-width="1.2"/></svg>
<svg class="b" style="left:752px;top:88px" width="13" height="13" viewBox="0 0 13 13"><rect x="0.5" y="0.5" width="12" height="12" fill="#fff" stroke="#333"/><path d="M2.8 6.6L5.3 9.2L10.2 3.6" fill="none" stroke="#222" stroke-width="1.2"/></svg>
<div class="b" style="left:384px;top:87px;width:73px;height:13px;background:repeating-conic-gradient(#009900 0 25%, #006600 0 50%) 0 0/2px 2px;"></div>
<div class="b" style="left:481px;top:87px;width:73px;height:13px;background:repeating-conic-gradient(#006600 0 25%, #009900 0 50%) 0 0/2px 2px;"></div>
<div class="b" style="left:576px;top:87px;width:73px;height:13px;background:#00ffff"></div>
<div class="b" style="left:672px;top:87px;width:73px;height:13px;background:repeating-conic-gradient(#000099 0 25%, #000066 0 50%) 0 0/2px 2px;"></div>
<div class="b" style="left:768px;top:87px;width:73px;height:13px;background:repeating-conic-gradient(#990000 0 25%, #660000 0 50%) 0 0/2px 2px;"></div>
<svg class="b" style="left:368px;top:104px" width="13" height="13" viewBox="0 0 13 13"><rect x="0.5" y="0.5" width="12" height="12" fill="#fff" stroke="#333"/><path d="M2.8 6.6L5.3 9.2L10.2 3.6" fill="none" stroke="#222" stroke-width="1.2"/></svg>
<div class="b" style="left:672px;top:103px;width:73px;height:13px;background:repeating-conic-gradient(#999900 0 25%, #666600 0 50%) 0 0/2px 2px;"></div>
<div class="b" style="left:768px;top:103px;width:73px;height:13px;background:repeating-conic-gradient(#009999 0 25%, #006666 0 50%) 0 0/2px 2px;"></div>
<div class="b" style="left:292px;top:120px;width:568px;height:1px;background:repeating-linear-gradient(to right,#8888b4 0 1px,#c4c49c 1px 2px)"></div>
<svg class="b" style="left:296px;top:128px" width="13" height="13" viewBox="0 0 13 13"><rect x="0.5" y="0.5" width="12" height="12" fill="#fff" stroke="#333"/><path d="M2.8 6.6L5.3 9.2L10.2 3.6" fill="none" stroke="#222" stroke-width="1.2"/></svg>
<svg class="b" style="left:368px;top:128px" width="13" height="13" viewBox="0 0 13 13"><rect x="0.5" y="0.5" width="12" height="12" fill="#fff" stroke="#333"/><path d="M2.8 6.6L5.3 9.2L10.2 3.6" fill="none" stroke="#222" stroke-width="1.2"/></svg>
<svg class="b" style="left:464px;top:128px" width="13" height="13" viewBox="0 0 13 13"><rect x="0.5" y="0.5" width="12" height="12" fill="#fff" stroke="#333"/><path d="M2.8 6.6L5.3 9.2L10.2 3.6" fill="none" stroke="#222" stroke-width="1.2"/></svg>
<svg class="b" style="left:560px;top:128px" width="13" height="13" viewBox="0 0 13 13"><rect x="0.5" y="0.5" width="12" height="12" fill="#fff" stroke="#333"/><path d="M2.8 6.6L5.3 9.2L10.2 3.6" fill="none" stroke="#222" stroke-width="1.2"/></svg>
<svg class="b" style="left:656px;top:128px" width="13" height="13" viewBox="0 0 13 13"><rect x="0.5" y="0.5" width="12" height="12" fill="#fff" stroke="#333"/><path d="M2.8 6.6L5.3 9.2L10.2 3.6" fill="none" stroke="#222" stroke-width="1.2"/></svg>
<svg class="b" style="left:752px;top:128px" width="13" height="13" viewBox="0 0 13 13"><rect x="0.5" y="0.5" width="12" height="12" fill="#fff" stroke="#333"/><path d="M2.8 6.6L5.3 9.2L10.2 3.6" fill="none" stroke="#222" stroke-width="1.2"/></svg>
<div class="b" style="left:384px;top:127px;width:73px;height:13px;background:#ffff00"></div>
<div class="b" style="left:480px;top:126px;width:73px;height:13px;background:repeating-conic-gradient(#000066 0 25%, #000099 0 50%) 0 0/2px 2px;"></div>
<div class="b" style="left:576px;top:126px;width:73px;height:13px;background:repeating-conic-gradient(#660000 0 25%, #990000 0 50%) 0 0/2px 2px;"></div>
<div class="b" style="left:292px;top:147px;width:568px;height:1px;background:repeating-linear-gradient(to right,#8888b4 0 1px,#c4c49c 1px 2px)"></div>
<svg class="b" style="left:332px;top:155px" width="13" height="13" viewBox="0 0 13 13"><circle cx="6.5" cy="6.5" r="6" fill="#fff" stroke="#333"/></svg>
<svg class="b" style="left:372px;top:155px" width="13" height="13" viewBox="0 0 13 13"><circle cx="6.5" cy="6.5" r="6" fill="#fff" stroke="#333"/><circle cx="6.5" cy="6.5" r="3.3" fill="#222"/></svg>
<svg class="b" style="left:436px;top:155px" width="13" height="13" viewBox="0 0 13 13"><circle cx="6.5" cy="6.5" r="6" fill="#fff" stroke="#333"/></svg>
<div class="b" style="left:579px;top:151px;width:49px;height:24px;background:#fff;border:1px solid #77777f;box-sizing:border-box"></div>
<div class="b" style="left:611px;top:154px;width:13px;height:8px;background:#f0f0fa;border:1px solid #b4b4c0;box-sizing:border-box"></div>
<div class="b" style="left:611px;top:162px;width:13px;height:9px;background:#f0f0fa;border:1px solid #b4b4c0;box-sizing:border-box"></div>
<svg class="b" style="left:613.5px;top:155.5px" width="8" height="4" viewBox="0 0 8 4"><path d="M0 4H8L4 0Z" fill="#000"/></svg>
<svg class="b" style="left:613.5px;top:165px" width="8" height="4" viewBox="0 0 8 4"><path d="M0 0H8L4 4Z" fill="#000"/></svg>
<div class="b" style="left:292px;top:174px;width:568px;height:1px;background:repeating-linear-gradient(to right,#8888b4 0 1px,#c4c49c 1px 2px)"></div>
<svg class="b" style="left:324px;top:181px" width="13" height="13" viewBox="0 0 13 13"><rect x="0.5" y="0.5" width="12" height="12" fill="#fff" stroke="#333"/></svg>
<svg class="b" style="left:464px;top:181px" width="13" height="13" viewBox="0 0 13 13"><rect x="0.5" y="0.5" width="12" height="12" fill="#fff" stroke="#333"/></svg>
<div class="b" style="left:340px;top:177px;width:121px;height:23px;background:#fff;border:1px solid #77777f;box-sizing:border-box"></div>
<div class="b" style="left:580px;top:177px;width:121px;height:23px;background:#fff;border:1px solid #77777f;box-sizing:border-box"></div>
<div class="b" style="left:292px;top:200px;width:567px;height:172px;background:#fff"></div>
<div class="b" style="left:291px;top:199px;width:569px;height:1px;background:repeating-linear-gradient(to right,#8888b4 0 1px,#c4c49c 1px 2px)"></div>
<div class="b" style="left:304px;top:221px;width:555px;height:19px;background:repeating-conic-gradient(#999900 0 25%, #666600 0 50%) 0 0/2px 2px;"></div>
<div class="b" style="left:369px;top:221px;width:1px;height:19px;background:#fff"></div>
<div class="b" style="left:579px;top:221px;width:1px;height:19px;background:#fff"></div>
<div class="b" style="left:303px;top:200px;width:1px;height:21px;background:#dde6f5"></div>
<div class="b" style="left:369px;top:200px;width:1px;height:21px;background:#dde6f5"></div>
<div class="b" style="left:579px;top:200px;width:1px;height:21px;background:#dde6f5"></div>
<div class="b" style="left:303px;top:221px;width:1px;height:20px;background:#dde6f5"></div>
<div class="b" style="left:292px;top:220px;width:12px;height:1px;background:#dde6f5"></div>
<div class="b" style="left:292px;top:240px;width:12px;height:1px;background:#dde6f5"></div>
<svg class="b" style="left:295px;top:225px" width="7" height="12" viewBox="0 0 7 12"><path d="M0 0L6.5 5.8L0 11.6Z" fill="#000"/></svg>
<svg class="b" style="left:306px;top:205px" width="6" height="9" viewBox="0 0 6 9"><path d="M2.5 0V7M0.3 4.6L2.5 7.2L4.7 4.6" fill="none" stroke="#0033ff" stroke-width="1.2"/></svg>
<svg class="b" style="left:297px;top:377px" width="7" height="8" viewBox="0 0 7 8"><path d="M5.6 0.6L1.6 3.7L5.6 6.8" fill="none" stroke="#55553c" stroke-width="2"/></svg>
<svg class="b" style="left:849px;top:377px" width="7" height="8" viewBox="0 0 7 8"><path d="M1.2 0.6L5.2 3.7L1.2 6.8" fill="none" stroke="#55553c" stroke-width="2"/></svg>
<div class="b" style="left:309px;top:373px;width:17px;height:15px;background:#ccccff"></div>
<div class="b" style="left:291px;top:389px;width:570px;height:1px;background:repeating-linear-gradient(to right,#8888b4 0 1px,#c4c49c 1px 2px)"></div>
<div class="b" style="left:291px;top:394px;width:552px;height:174px;background:#fff"></div>
<div class="b" style="left:287px;top:568px;width:574px;height:1px;background:repeating-linear-gradient(to right,#8888b4 0 1px,#c4c49c 1px 2px)"></div>
<div class="b" style="left:860px;top:390px;width:1px;height:178px;background:#d8d8dc"></div>
<svg class="b" style="left:847px;top:402px" width="9" height="6" viewBox="0 0 9 6"><path d="M0.8 4.8L4.3 1.2L7.8 4.8" fill="none" stroke="#b4b4c4" stroke-width="1.2"/></svg>
<svg class="b" style="left:847px;top:557px" width="9" height="6" viewBox="0 0 9 6"><path d="M0.9 1L4.4 4.6L7.9 1" fill="none" stroke="#b0b0b0" stroke-width="1.2"/></svg>
<div class="b" style="left:860px;top:81px;width:1px;height:309px;background:repeating-linear-gradient(to bottom,#8888b4 0 1px,#c4c49c 1px 2px)"></div>
<div class="b" style="left:1px;top:569px;width:860px;height:19px;background:#fff"></div>
<div class="b" style="left:2px;top:572px;width:38px;height:15px;background:repeating-conic-gradient(#000066 0 25%, #000099 0 50%) 0 0/2px 2px;"></div>
<div class="b" style="left:44px;top:572px;width:414px;height:15px;background:repeating-conic-gradient(#000066 0 25%, #000099 0 50%) 0 0/2px 2px;"></div>
<div class="b" style="left:462px;top:572px;width:66px;height:15px;background:repeating-conic-gradient(#000066 0 25%, #000099 0 50%) 0 0/2px 2px;"></div>
<div class="b" style="left:532px;top:572px;width:150px;height:15px;background:repeating-conic-gradient(#000066 0 25%, #000099 0 50%) 0 0/2px 2px;"></div>
<div class="b" style="left:686px;top:572px;width:65px;height:15px;background:repeating-conic-gradient(#000066 0 25%, #000099 0 50%) 0 0/2px 2px;"></div>
<div class="b" style="left:755px;top:572px;width:41px;height:15px;background:repeating-conic-gradient(#000099 0 25%, #000066 0 50%) 0 0/2px 2px;"></div>
<div class="b" style="left:800px;top:572px;width:41px;height:15px;background:repeating-conic-gradient(#000066 0 25%, #000099 0 50%) 0 0/2px 2px;"></div>
<div class="b" style="left:845px;top:572px;width:15px;height:15px;background:repeating-conic-gradient(#000099 0 25%, #000066 0 50%) 0 0/2px 2px;"></div>
<svg class="b" style="left:851px;top:578px" width="10" height="10" viewBox="0 0 10 10"><g fill="#f4f4d8"><rect x="6" y="0" width="2" height="2"/><rect x="3" y="3" width="2" height="2"/><rect x="6" y="3" width="2" height="2"/><rect x="0" y="6" width="2" height="2"/><rect x="3" y="6" width="2" height="2"/><rect x="6" y="6" width="2" height="2"/></g></svg>
<span class="t" style="left:31.0px;top:8.1px;letter-spacing:-0.162px;color:#fff;">Message Centre @ TM183C [TMWIN - My Trucking Co Canada]</span>
<span class="t" style="left:8.3px;top:33.1px;letter-spacing:-0.300px;color:#000;transform:scaleX(0.9488);">File</span>
<span class="t" style="left:40.8px;top:33.1px;letter-spacing:-0.300px;color:#000;transform:scaleX(0.9353);">Messages</span>
<span class="t" style="left:105.0px;top:33.1px;letter-spacing:-0.285px;color:#000;">Asset Tracking</span>
<span class="t" style="left:195.6px;top:33.1px;letter-spacing:0.109px;color:#000;">Configuration</span>
<span class="t" style="left:284.0px;top:33.1px;letter-spacing:0.275px;color:#000;">Multi-Company</span>
<span class="t" style="left:382.3px;top:33.1px;letter-spacing:-0.079px;color:#000;">Tools</span>
<span class="t" style="left:425.0px;top:33.1px;letter-spacing:-0.300px;color:#000;transform:scaleX(0.9963);">Help</span>
<span class="t" style="left:11.3px;top:86.1px;letter-spacing:-0.300px;color:#000;transform:scaleX(0.9760);">All Messages (F6)</span>
<span class="t" style="left:50.0px;top:107.1px;letter-spacing:-0.300px;color:#000;transform:scaleX(0.9793);">All Messages (F6)</span>
<span class="t" style="left:50.0px;top:125.1px;letter-spacing:-0.300px;color:#000;transform:scaleX(0.9788);">New Messages (F7)</span>
<span class="t" style="left:50.0px;top:143.1px;letter-spacing:-0.263px;color:#000;">Favorite Filter (F8)</span>
<span class="t" style="left:50.0px;top:161.1px;letter-spacing:-0.240px;color:#000;">Private Filters</span>
<span class="t" style="left:50.0px;top:179.1px;letter-spacing:-0.145px;color:#000;">Public Filters</span>
<span class="t" style="left:50.0px;top:197.1px;letter-spacing:-0.130px;color:#000;">Temporary Filters</span>
<span class="t" style="left:9.5px;top:235.1px;letter-spacing:-0.300px;color:#000;transform:scaleX(0.9580);">Fin<u>d</u></span>
<span class="t" style="left:50.0px;top:255.1px;letter-spacing:-0.300px;color:#000;transform:scaleX(0.9945);">Drivers</span>
<span class="t" style="left:69.3px;top:273.1px;letter-spacing:-0.300px;color:#000;transform:scaleX(0.8767);">DR001</span>
<span class="t" style="left:69.3px;top:291.1px;letter-spacing:-0.300px;color:#000;transform:scaleX(0.8767);">DR003</span>
<span class="t" style="left:50.0px;top:309.1px;letter-spacing:-0.199px;color:#000;">Power Units</span>
<span class="t" style="left:69.3px;top:327.1px;letter-spacing:-0.300px;color:#000;transform:scaleX(0.8929);">PU001</span>
<span class="t" style="left:69.3px;top:345.1px;letter-spacing:-0.300px;color:#000;transform:scaleX(0.8929);">PU003</span>
<span class="t" style="left:69.3px;top:363.1px;letter-spacing:-0.300px;color:#000;transform:scaleX(0.8929);">PU007</span>
<span class="t" style="left:50.0px;top:381.1px;letter-spacing:-0.300px;color:#000;transform:scaleX(0.9734);">Devices</span>
<span class="t" style="left:69.5px;top:399.1px;letter-spacing:-0.300px;color:#000;transform:scaleX(0.9699);">CDN (TruETA)</span>
<span class="t" style="left:69.5px;top:417.1px;letter-spacing:-0.300px;color:#000;transform:scaleX(0.9823);">ORBCOMM</span>
<span class="t" style="left:69.5px;top:435.1px;letter-spacing:-0.064px;color:#000;">Shaw Tracking/Omnitracs</span>
<span class="t" style="left:50.2px;top:453.1px;letter-spacing:-0.300px;color:#000;transform:scaleX(0.9905);">Groups</span>
<span class="t" style="left:69.5px;top:471.1px;letter-spacing:-0.300px;color:#000;transform:scaleX(0.9857);">BCDRIVERS (Shaw Tracking/Omnitracs)</span>
<span class="t" style="left:69.5px;top:489.1px;letter-spacing:-0.300px;color:#000;transform:scaleX(0.9800);">ORB-ONE (ORBCOMM)</span>
<span class="t" style="left:69.5px;top:507.1px;letter-spacing:-0.300px;color:#000;transform:scaleX(0.9918);">USA-NW (ORBCOMM)</span>
<span class="t" style="left:50.2px;top:525.1px;letter-spacing:-0.300px;color:#000;transform:scaleX(0.9770);">Trailers</span>
<span class="t" style="left:69.3px;top:543.1px;letter-spacing:-0.300px;color:#000;transform:scaleX(0.8382);">RFR001</span>
<span class="t" style="left:312.2px;top:87.1px;letter-spacing:-0.300px;color:#000;transform:scaleX(0.9973);">Forward</span>
<span class="t" style="left:384.0px;top:103.1px;letter-spacing:-0.274px;color:#000;">User &quot;DAVIDH&quot; Only</span>
<span class="t" style="left:312.4px;top:127.1px;letter-spacing:-0.300px;color:#000;transform:scaleX(0.9730);">Return</span>
<span class="t bd" style="left:384.7px;top:86.5px;letter-spacing:-0.300px;color:#00ff00;font-size:11px;font-weight:bold;font-style:italic;transform:scaleX(0.9079);"><u>1</u> Not Sent</span>
<span class="t" style="left:481.5px;top:86.1px;letter-spacing:-0.300px;color:#00ffff;transform:scaleX(0.9216);"><u>2</u> Sent</span>
<span class="t" style="left:576.0px;top:86.1px;letter-spacing:-0.300px;color:#800000;transform:scaleX(0.8893);"><u>3</u> Ack M/U</span>
<span class="t" style="left:672.7px;top:86.1px;letter-spacing:-0.300px;color:#ffff00;transform:scaleX(0.9058);"><u>4</u> Driver Read</span>
<span class="t" style="left:768.5px;top:86.1px;letter-spacing:-0.300px;color:#fff;transform:scaleX(0.8704);"><u>5</u> Canceled</span>
<span class="t bd" style="left:672.0px;top:102.5px;letter-spacing:-0.300px;color:#000;font-size:11px;font-weight:bold;text-decoration:underline;transform:scaleX(0.9471);">Sent (Late)</span>
<span class="t" style="left:768.5px;top:102.1px;letter-spacing:-0.300px;color:#ffff00;font-style:italic;transform:scaleX(0.9080);">Selected</span>
<span class="t" style="left:384.3px;top:126.1px;letter-spacing:-0.300px;color:#000;transform:scaleX(0.9086);"><u>6</u> Not Read</span>
<span class="t" style="left:480.6px;top:125.1px;letter-spacing:-0.300px;color:#fff;transform:scaleX(0.8709);"><u>7</u> Read</span>
<span class="t" style="left:576.3px;top:125.1px;letter-spacing:-0.300px;color:#00ffff;transform:scaleX(0.8945);"><u>8</u> Canceled</span>
<span class="t" style="left:671.6px;top:127.1px;letter-spacing:-0.140px;color:#000;">9 Incl. Owned</span>
<span class="t" style="left:767.6px;top:127.1px;letter-spacing:0.001px;color:#000;">0 Incl. Not Owned</span>
<span class="t" style="left:296.0px;top:155.1px;letter-spacing:-0.300px;color:#000;transform:scaleX(0.9454);">Days</span>
<span class="t" style="left:349.0px;top:155.1px;letter-spacing:-0.172px;color:#000;">All</span>
<span class="t" style="left:389.0px;top:155.1px;letter-spacing:0.062px;color:#000;">Number</span>
<span class="t" style="left:452.5px;top:155.1px;letter-spacing:-0.300px;color:#000;transform:scaleX(0.9364);">Range</span>
<span class="t" style="left:499.5px;top:155.1px;letter-spacing:-0.300px;color:#000;transform:scaleX(0.9770);">Days To Show</span>
<span class="t" style="left:582.8px;top:154.1px;letter-spacing:-0.300px;color:#000;transform:scaleX(0.8423);">10</span>
<span class="t" style="left:296.0px;top:180.1px;letter-spacing:-0.234px;color:#000;">Filter</span>
<span class="t" style="left:480.5px;top:180.1px;letter-spacing:0.156px;color:#000;">Not</span>
<span class="t" style="left:540.5px;top:181.1px;letter-spacing:-0.300px;color:#000;transform:scaleX(0.9170);"><u>S</u>earch</span>
<span class="t" style="left:313.6px;top:203.1px;letter-spacing:-0.300px;color:#000;transform:scaleX(0.9972);">Msg #</span>
<span class="t" style="left:372.0px;top:203.1px;letter-spacing:-0.300px;color:#000;transform:scaleX(0.9779);">Created</span>
<span class="t" style="left:582.5px;top:203.1px;letter-spacing:-0.300px;color:#000;transform:scaleX(0.9133);">User ID</span>
<span class="t bd" style="left:338.5px;top:222.5px;letter-spacing:-0.300px;color:#000;font-size:11px;font-weight:bold;text-decoration:underline;transform:scaleX(0.8915);">2001</span>
<span class="t bd" style="left:372.0px;top:222.5px;letter-spacing:-0.300px;color:#000;font-size:11px;font-weight:bold;text-decoration:underline;transform:scaleX(0.9676);">11/1/2018 11:52:25 AM</span>
<span class="t bd" style="left:582.8px;top:222.5px;letter-spacing:-0.300px;color:#000;font-size:11px;font-weight:bold;text-decoration:underline;transform:scaleX(0.9106);">DAVIDH</span>
<span class="t mn" style="left:293.5px;top:396.2px;letter-spacing:-0.010px;color:#000;font-size:11.5px;">Binary Message</span>
<span class="t" style="left:474.5px;top:572.1px;letter-spacing:-0.300px;color:#fff;transform:scaleX(0.9323);">TM183C</span>
<span class="t" style="left:544.0px;top:572.1px;letter-spacing:-0.187px;color:#fff;">My Trucking Co Canada</span>
<span class="t" style="left:697.0px;top:572.1px;letter-spacing:-0.300px;color:#fff;transform:scaleX(0.9662);">DAVIDH</span>
<span class="t" style="left:766.7px;top:572.1px;letter-spacing:-0.300px;color:#fff;transform:scaleX(0.9222);">cap</span>
<span class="t" style="left:806.0px;top:572.1px;letter-spacing:-0.164px;color:#fff;">NUM</span>
</body></html>
